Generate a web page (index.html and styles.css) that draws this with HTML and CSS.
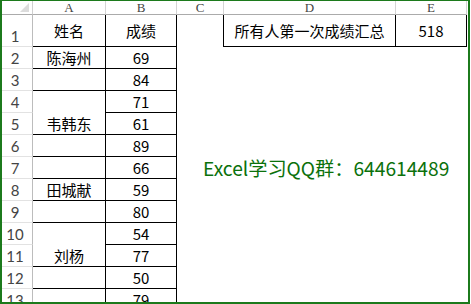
FILE: index.html
```html
<!DOCTYPE html>
<html lang="zh-CN">
<head>
<meta charset="utf-8">
<title>Excel</title>
<link rel="stylesheet" href="styles.css">
</head>
<body>
<div class="frame">
  <div class="sheet">
    <div class="corner"><span class="tri"></span></div>
    <div class="colhead">A</div>
    <div class="colhead">B</div>
    <div class="colhead">C</div>
    <div class="colhead">D</div>
    <div class="colhead">E</div>

    <div class="rowhead">1</div>
    <div class="cell br bb">姓名</div>
    <div class="cell br bb">成绩</div>
    <div class="cell br"></div>
    <div class="cell br bb">所有人第一次成绩汇总</div>
    <div class="cell br bb">518</div>

    <div class="rowhead">2</div>
    <div class="cell br bb">陈海州</div>
    <div class="cell br bb num">69</div>
    <div class="cell"></div><div class="cell"></div><div class="cell"></div>

    <div class="rowhead">3</div>
    <div class="cell br bb"></div>
    <div class="cell br bb num">84</div>
    <div class="cell"></div><div class="cell"></div><div class="cell"></div>

    <div class="rowhead">4</div>
    <div class="cell br"></div>
    <div class="cell br bb num">71</div>
    <div class="cell"></div><div class="cell"></div><div class="cell"></div>

    <div class="rowhead">5</div>
    <div class="cell br bb">韦韩东</div>
    <div class="cell br bb num">61</div>
    <div class="cell"></div><div class="cell"></div><div class="cell"></div>

    <div class="rowhead">6</div>
    <div class="cell br bb"></div>
    <div class="cell br bb num">89</div>
    <div class="cell"></div><div class="cell"></div><div class="cell"></div>

    <div class="rowhead">7</div>
    <div class="cell br bb"></div>
    <div class="cell br bb num">66</div>
    <div class="cell"></div><div class="cell"></div><div class="cell"></div>

    <div class="rowhead">8</div>
    <div class="cell br bb">田城献</div>
    <div class="cell br bb num">59</div>
    <div class="cell"></div><div class="cell"></div><div class="cell"></div>

    <div class="rowhead">9</div>
    <div class="cell br bb"></div>
    <div class="cell br bb num">80</div>
    <div class="cell"></div><div class="cell"></div><div class="cell"></div>

    <div class="rowhead">10</div>
    <div class="cell br"></div>
    <div class="cell br bb num">54</div>
    <div class="cell"></div><div class="cell"></div><div class="cell"></div>

    <div class="rowhead">11</div>
    <div class="cell br bb">刘杨</div>
    <div class="cell br bb num">77</div>
    <div class="cell"></div><div class="cell"></div><div class="cell"></div>

    <div class="rowhead">12</div>
    <div class="cell br bb"></div>
    <div class="cell br bb num">50</div>
    <div class="cell"></div><div class="cell"></div><div class="cell"></div>

    <div class="rowhead">13</div>
    <div class="cell br bb"></div>
    <div class="cell br bb num">79</div>
    <div class="cell"></div><div class="cell"></div><div class="cell"></div>
  </div>
  <div class="note">Excel学习QQ群：644614489</div>
</div>
</body>
</html>
```
FILE: styles.css
```css
html, body {
  margin: 0;
  padding: 0;
  background: #ffffff;
}

.frame {
  position: relative;
  box-sizing: border-box;
  width: 470px;
  height: 304px;
  border-left: 2px solid #1c7a1c;
  border-top: 1px solid #1c7a1c;
  border-right: 2px solid #1c7a1c;
  border-bottom: 2px solid #1c7a1c;
  overflow: hidden;
  background: #ffffff;
}

.sheet {
  display: grid;
  grid-template-columns: 31px 73px 71px 47px 172px 71px;
  grid-template-rows: 14px 32px repeat(12, 22px);
  font-family: "Noto Sans CJK SC", "Noto Sans", sans-serif;
  font-size: 15px;
  color: #000;
}

.corner {
  position: relative;
  box-sizing: border-box;
  background: #ffffff;
  border-right: 1px solid #d0d0d0;
  border-bottom: 1px solid #ababab;
}

.tri {
  position: absolute;
  right: 3px;
  bottom: 2px;
  width: 0;
  height: 0;
  border-left: 9px solid transparent;
  border-bottom: 9px solid #dcdcdc;
}

.colhead {
  box-sizing: border-box;
  background: #ffffff;
  border-right: 1px solid #d4d4d4;
  border-bottom: 1px solid #ababab;
  font-family: "Liberation Serif", serif;
  font-size: 13px;
  line-height: 13px;
  color: #444;
  text-align: center;
}

.rowhead {
  box-sizing: border-box;
  border-right: 1px solid #bcbcbc;
  border-bottom: 1px solid #e2e2e2;
  font-family: "Lato", "Liberation Sans", sans-serif;
  font-size: 15px;
  color: #444;
  display: flex;
  align-items: flex-end;
  justify-content: center;
  padding: 0 4px 1px 0;
  line-height: 18px;
}

.cell {
  box-sizing: border-box;
  display: flex;
  align-items: center;
  justify-content: center;
  white-space: nowrap;
  line-height: 20px;
  padding-top: 1px;
}

.br {
  border-right: 1px solid #000;
}

.bb {
  border-bottom: 1px solid #000;
}

.note {
  position: absolute;
  left: 201px;
  top: 157px;
  font-family: "Noto Sans CJK SC", "Noto Sans", sans-serif;
  font-size: 19.2px;
  line-height: 20px;
  color: #0b710b;
  white-space: nowrap;
}
```
